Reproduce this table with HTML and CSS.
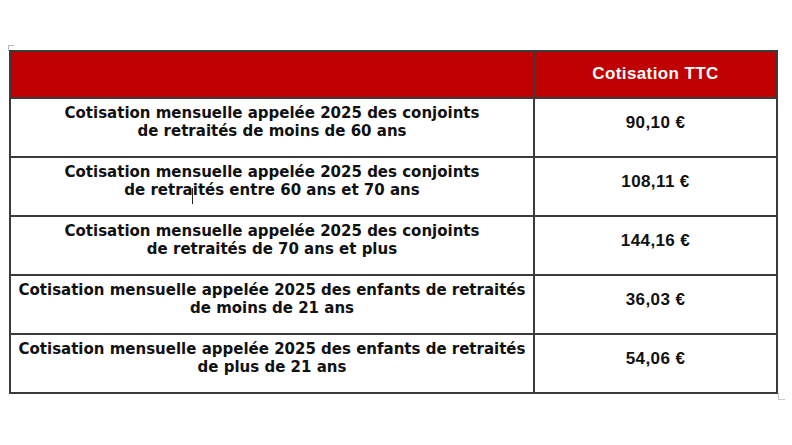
FILE: index.html
```html
<!DOCTYPE html>
<html lang="fr">
<head>
<meta charset="utf-8">
<title>Cotisations 2025</title>
<link rel="stylesheet" href="styles.css">
</head>
<body>
<div class="page">
  <span class="mark mark-tl"></span>
  <table class="grid">
    <thead>
      <tr>
        <th class="label"></th>
        <th class="amount">Cotisation TTC</th>
      </tr>
    </thead>
    <tbody>
      <tr>
        <td class="label">Cotisation mensuelle appelée 2025 des conjoints<br>de retraités de moins de 60 ans</td>
        <td class="amount">90,10 €</td>
      </tr>
      <tr>
        <td class="label">Cotisation mensuelle appelée 2025 des conjoints<br>de retraités entre 60 ans et 70 ans<span class="caret"></span></td>
        <td class="amount">108,11 €</td>
      </tr>
      <tr>
        <td class="label">Cotisation mensuelle appelée 2025 des conjoints<br>de retraités de 70 ans et plus</td>
        <td class="amount">144,16 €</td>
      </tr>
      <tr>
        <td class="label">Cotisation mensuelle appelée 2025 des enfants de retraités<br>de moins de 21 ans</td>
        <td class="amount">36,03 €</td>
      </tr>
      <tr>
        <td class="label">Cotisation mensuelle appelée 2025 des enfants de retraités<br>de plus de 21 ans</td>
        <td class="amount">54,06 €</td>
      </tr>
    </tbody>
  </table>
  <span class="mark mark-br"></span>
</div>
</body>
</html>
```
FILE: styles.css
```css
html, body {
  margin: 0;
  padding: 0;
  background: #ffffff;
}

.page {
  position: relative;
  width: 792px;
  height: 445px;
  padding: 50px 0 0 9px;
  box-sizing: border-box;
}

.grid {
  border-collapse: collapse;
  width: 769px;
  table-layout: fixed;
}

.grid th,
.grid td {
  border: 2px solid #3b3b3b;
  padding: 0;
  text-align: center;
}

.grid th.label { width: 522px; }

.grid thead tr { height: 47px; }

.grid thead th {
  background: #c00000;
  color: #ffffff;
  font-family: "Liberation Sans", Arial, sans-serif;
  font-weight: bold;
  font-size: 17px;
  letter-spacing: 0.4px;
  vertical-align: middle;
  padding-bottom: 1px;
}

.grid tbody tr { height: 59px; }

.grid tbody td {
  vertical-align: top;
  color: #111111;
}

.grid td.label {
  font-family: "DejaVu Sans", Verdana, sans-serif;
  font-weight: bold;
  font-size: 15px;
  line-height: 18px;
  padding-top: 5px;
  position: relative;
}

.grid td.amount {
  font-family: "Liberation Sans", Arial, sans-serif;
  font-weight: bold;
  font-size: 17px;
  line-height: 20px;
  letter-spacing: 0.4px;
  padding-top: 14px;
}

.caret {
  position: absolute;
  left: 181px;
  top: 30px;
  width: 1px;
  height: 16px;
  background: #222222;
}

.mark {
  position: absolute;
  display: block;
}

.mark-tl {
  left: 8px;
  top: 45px;
  width: 5px;
  height: 5px;
  border-left: 1px solid #b8b8b8;
  border-top: 1px solid #b8b8b8;
}

.mark-br {
  left: 778px;
  top: 393px;
  width: 6px;
  height: 6px;
  border-left: 1px solid #c8c8c8;
  border-bottom: 1px solid #c8c8c8;
}
```
